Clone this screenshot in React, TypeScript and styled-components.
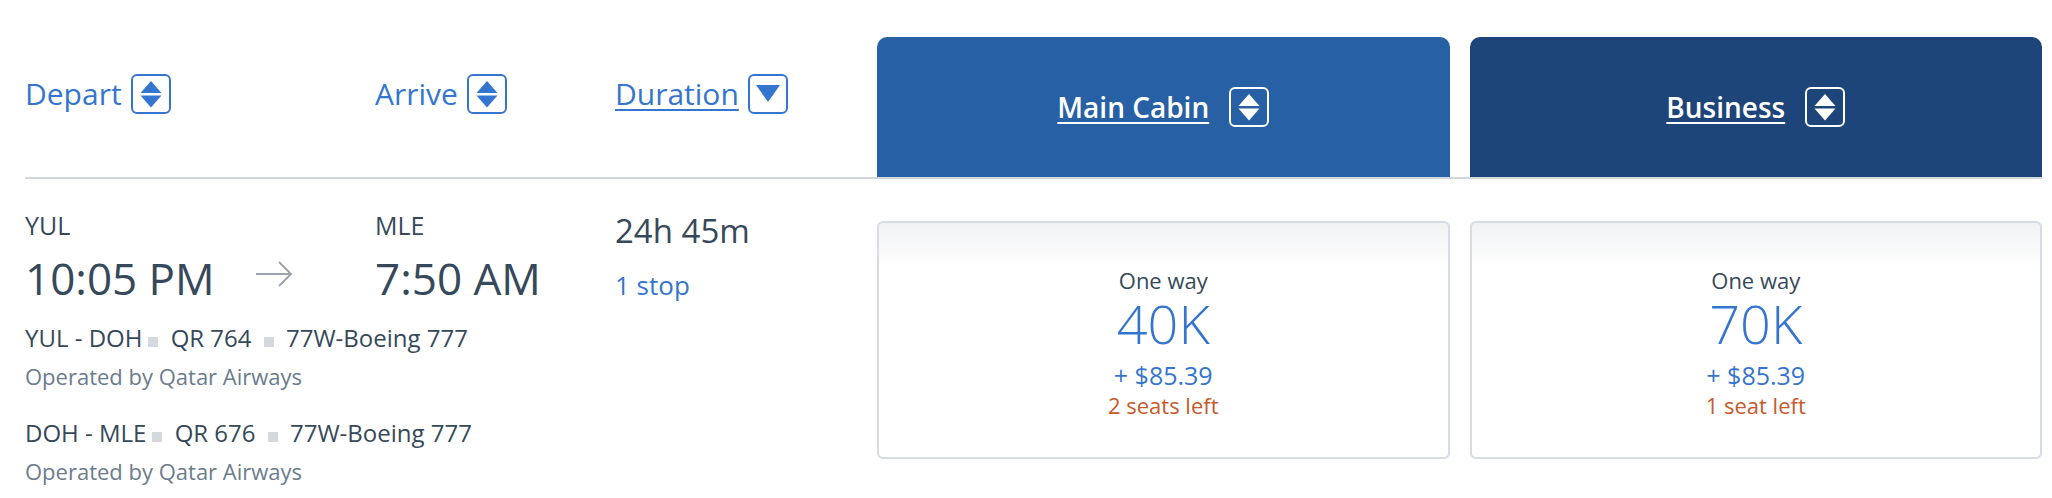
import styled, { createGlobalStyle } from 'styled-components';

const GlobalStyle = createGlobalStyle`
  body {
    margin: 0;
    background: #ffffff;
    font-family: "Open Sans", "Noto Sans", sans-serif;
    overflow: hidden;
  }
`;

const BLUE = '#3575cf';
const DARK = '#36495a';

const SortIcon = ({ mode, color }: { mode: 'both' | 'down'; color: string }) => (
  <svg width="40" height="40" viewBox="0 0 40 40">
    <rect x="1" y="1" width="38" height="38" rx="5" fill="none" stroke={color} strokeWidth="2" />
    {mode === 'both' ? (
      <>
        <path d="M20 7 L30.5 19 H9.5 Z" fill={color} />
        <path d="M9.5 21.5 H30.5 L20 33.5 Z" fill={color} />
      </>
    ) : (
      <path d="M8 11 H32 L20 28 Z" fill={color} />
    )}
  </svg>
);

const Arrow = () => (
  <svg width="38" height="26" viewBox="0 0 38 26">
    <path d="M1 13 H36 M24 1 L36 13 L24 25" fill="none" stroke="#9ca5ad" strokeWidth="2" />
  </svg>
);

const Page = styled.div`
  padding: 0 10px 0 25px;
`;

const Columns = styled.div`
  display: grid;
  grid-template-columns: 330px 220px 242px 1fr 1fr;
  column-gap: 20px;
`;

const HeaderRow = styled(Columns)`
  height: 140px;
  margin-top: 37px;
  border-bottom: 2px solid #d0d7dd;
`;

const SortLabel = styled.div`
  align-self: start;
  margin-top: 37px;
  display: flex;
  align-items: center;
  gap: 9px;
`;

const LabelText = styled.span<{ $active?: boolean }>`
  font-size: 30px;
  line-height: 40px;
  color: ${BLUE};
  text-decoration: ${(p) => (p.$active ? 'underline' : 'none')};
  text-decoration-thickness: 2px;
  text-underline-offset: 4px;
`;

const CabinTab = styled.div<{ $tone: string }>`
  background: ${(p) => p.$tone};
  border-radius: 10px 10px 0 0;
  display: flex;
  align-items: center;
  justify-content: center;
  gap: 20px;
`;

const CabinName = styled.span`
  font-size: 28px;
  font-weight: 600;
  color: #ffffff;
  text-decoration: underline;
  text-decoration-thickness: 2px;
  text-underline-offset: 4px;
`;

const FlightRow = styled(Columns)`
  padding-top: 31px;
  grid-template-rows: auto auto;
`;

const Stack = styled.div`
  display: flex;
  flex-direction: column;
  align-items: flex-start;
`;

const Airport = styled.div`
  font-size: 25px;
  line-height: 30px;
  color: ${DARK};
`;

const TimeLine = styled.div`
  display: flex;
  align-items: center;
  margin-top: 12px;
`;

const Time = styled.span`
  font-size: 44px;
  font-weight: 400;
  line-height: 52px;
  color: ${DARK};
`;

const ArrowSlot = styled.span`
  display: flex;
  margin-left: 40px;
  margin-bottom: 8px;
`;

const Duration = styled.div`
  font-size: 33px;
  line-height: 42px;
  color: ${DARK};
`;

const Stops = styled.div`
  margin-top: 16px;
  font-size: 26px;
  line-height: 34px;
  color: ${BLUE};
`;

const Legs = styled.div`
  grid-column: 1 / 4;
  grid-row: 2;
  margin-top: 19px;
`;

const Leg = styled.div<{ $first?: boolean }>`
  margin-top: ${(p) => (p.$first ? '0' : '26px')};
`;

const LegLine = styled.div`
  font-size: 24px;
  line-height: 30px;
  color: ${DARK};
  white-space: pre;
`;

const Dot = styled.span`
  display: inline-block;
  width: 10px;
  height: 10px;
  margin: 0 6px;
  background: #d3d9de;
`;

const Operator = styled.div`
  margin-top: 7px;
  font-size: 22px;
  line-height: 32px;
  color: #6b7c8c;
`;

const FareCard = styled.div<{ $col: number }>`
  grid-column: ${(p) => p.$col};
  grid-row: 1 / 3;
  align-self: start;
  margin-top: 11px;
  height: 238px;
  box-sizing: border-box;
  border: 2px solid #d6dce2;
  border-radius: 6px;
  background: linear-gradient(#f1f2f4, #ffffff 46px);
  display: flex;
  flex-direction: column;
  align-items: center;
  padding-top: 43px;
`;

const OneWay = styled.div`
  font-size: 22px;
  line-height: 28px;
  color: ${DARK};
`;

const Miles = styled.div`
  font-size: 54px;
  font-weight: 300;
  line-height: 58px;
  color: ${BLUE};
`;

const Fee = styled.div`
  margin-top: 8px;
  font-size: 25px;
  line-height: 30px;
  color: ${BLUE};
`;

const Seats = styled.div`
  margin-top: 1px;
  font-size: 22px;
  line-height: 28px;
  color: #c65a2c;
`;

const legs = [
  { route: 'YUL - DOH', flight: 'QR 764', plane: '77W-Boeing 777' },
  { route: 'DOH - MLE', flight: 'QR 676', plane: '77W-Boeing 777' },
];

const fares = [
  { miles: '40K', fee: '+ $85.39', seats: '2 seats left' },
  { miles: '70K', fee: '+ $85.39', seats: '1 seat left' },
];

export default function App() {
  return (
    <Page>
      <GlobalStyle />
      <HeaderRow>
        <SortLabel>
          <LabelText>Depart</LabelText>
          <SortIcon mode="both" color={BLUE} />
        </SortLabel>
        <SortLabel>
          <LabelText>Arrive</LabelText>
          <SortIcon mode="both" color={BLUE} />
        </SortLabel>
        <SortLabel>
          <LabelText $active>Duration</LabelText>
          <SortIcon mode="down" color={BLUE} />
        </SortLabel>
        <CabinTab $tone="#2760a5">
          <CabinName>Main Cabin</CabinName>
          <SortIcon mode="both" color="#ffffff" />
        </CabinTab>
        <CabinTab $tone="#1d4579">
          <CabinName>Business</CabinName>
          <SortIcon mode="both" color="#ffffff" />
        </CabinTab>
      </HeaderRow>

      <FlightRow>
        <Stack>
          <Airport>YUL</Airport>
          <TimeLine>
            <Time>10:05 PM</Time>
            <ArrowSlot>
              <Arrow />
            </ArrowSlot>
          </TimeLine>
        </Stack>
        <Stack>
          <Airport>MLE</Airport>
          <TimeLine>
            <Time>7:50 AM</Time>
          </TimeLine>
        </Stack>
        <Stack>
          <Duration>24h 45m</Duration>
          <Stops>1 stop</Stops>
        </Stack>

        {fares.map((f, i) => (
          <FareCard key={f.miles} $col={i + 4}>
            <OneWay>One way</OneWay>
            <Miles>{f.miles}</Miles>
            <Fee>{f.fee}</Fee>
            <Seats>{f.seats}</Seats>
          </FareCard>
        ))}

        <Legs>
          {legs.map((l, i) => (
            <Leg key={l.route} $first={i === 0}>
              <LegLine>
                {l.route}
                <Dot />
                {' ' + l.flight + ' '}
                <Dot />
                {' ' + l.plane}
              </LegLine>
              <Operator>Operated by Qatar Airways</Operator>
            </Leg>
          ))}
        </Legs>
      </FlightRow>
    </Page>
  );
}
